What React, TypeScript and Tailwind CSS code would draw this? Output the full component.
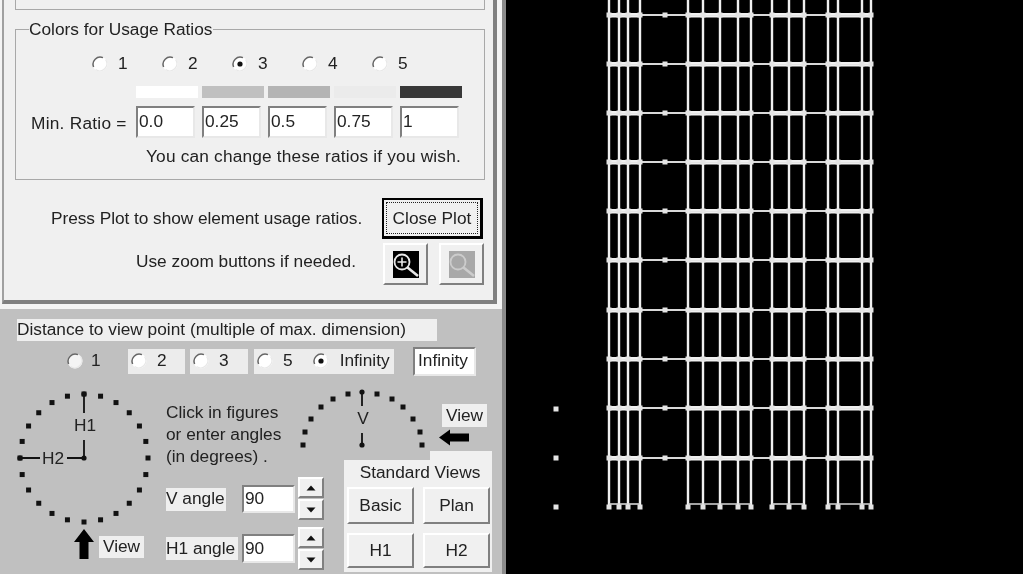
const FONT = "font-['Liberation_Sans',Arial,sans-serif]";

function Radio({ on = false, glow = false }: { on?: boolean; glow?: boolean }) {
  return (
    <svg width="18" height="18" viewBox="0 0 18 18" className="shrink-0">
      <circle cx="9" cy="9" r="7.5" fill={glow ? "#f4f4f4" : "#ffffff"} />
      <path d="M12 2.6 A7.2 7.2 0 0 0 2.6 12" fill="none" stroke="#666666" strokeWidth="1.5" />
      <path d="M14.6 4.6 A7.2 7.2 0 0 1 4.6 14.6" fill="none" stroke="#e8e8e8" strokeWidth="1.2" />
      {on && <circle cx="9" cy="9" r="2.6" fill="#111111" />}
    </svg>
  );
}

function Field({ value, className }: { value: string; className: string }) {
  return (
    <div className={`flex items-center bg-white border-2 border-t-[#808080] border-l-[#808080] border-r-[#e8e8e8] border-b-[#e8e8e8] pl-[1px] ${className}`}>
      {value}
    </div>
  );
}

function Btn({ label, className }: { label: string; className: string }) {
  return (
    <div className={`flex items-center justify-center bg-[#f0f0f0] border-2 border-t-white border-l-white border-r-[#808080] border-b-[#808080] ${className}`}>
      {label}
    </div>
  );
}

function Spin({ up }: { up: boolean }) {
  return (
    <div className="flex items-center justify-center w-[26px] h-[21px] bg-[#f0f0f0] border-2 border-t-white border-l-white border-r-[#808080] border-b-[#808080]">
      <svg width="10" height="6" viewBox="0 0 10 6">
        <path d={up ? "M5 0.5 L9.5 5.5 L0.5 5.5 Z" : "M0.5 0.5 L9.5 0.5 L5 5.5 Z"} fill="#111111" />
      </svg>
    </div>
  );
}

function Magnifier({ dark }: { dark: boolean }) {
  const c = dark ? "#e8e8e8" : "#cccccc";
  return (
    <div className="flex items-center justify-center w-[45px] h-[42px] bg-[#f0f0f0] border-2 border-t-white border-l-white border-r-[#808080] border-b-[#808080]">
      <svg width="26" height="27" viewBox="0 0 26 27">
        <rect width="26" height="27" fill={dark ? "#000000" : "#a8a8a8"} />
        <circle cx="9" cy="11" r="7.5" fill="none" stroke={c} strokeWidth="1.8" />
        <path d="M14.5 16.5 L25 25" stroke={c} strokeWidth="2.6" />
        {dark && <path d="M4.5 11 H13.5 M9 6.5 V15.5" stroke={c} strokeWidth="1.6" />}
      </svg>
    </div>
  );
}

const leftDots = Array.from({ length: 24 }, (_, i) => {
  const a = (i * 15 * Math.PI) / 180;
  return [84 + 64 * Math.sin(a), 73 + 64 * -Math.cos(a)];
});

function LeftClock() {
  return (
    <svg width="166" height="145" viewBox="0 0 166 145" className="block">
      {leftDots.map(([x, y], i) => (
        <rect key={i} x={x - 2.5} y={y - 2.5} width="5" height="5" fill="#111111" />
      ))}
      <path d="M84 9 V28 M84 55 V73 H67 M40 73 H20" stroke="#111111" strokeWidth="1.8" fill="none" />
      <circle cx="84" cy="73" r="2.6" fill="#111111" />
      <circle cx="20" cy="73" r="2.6" fill="#111111" />
      <circle cx="84" cy="9" r="2.6" fill="#111111" />
      <text x="85" y="46" textAnchor="middle" fontFamily="Liberation Sans" fontSize="17.3" fill="#222222">H1</text>
      <text x="53" y="79" textAnchor="middle" fontFamily="Liberation Sans" fontSize="17.3" fill="#222222">H2</text>
    </svg>
  );
}

const vDots = [
  [303, 60], [305, 47], [311, 34], [321, 22], [333, 14], [348, 9], [377, 9], [392, 14], [403, 22], [413, 34], [420, 47], [422, 60],
];

function VFigure() {
  return (
    <svg width="132" height="66" viewBox="298 385 132 66" className="block shrink-0">
      {vDots.map(([x, y], i) => (
        <rect key={i} x={x - 2.5} y={y + 382.5} width="5" height="5" fill="#111111" />
      ))}
      <path d="M362 392 V406 M362 433 V445" stroke="#111111" strokeWidth="1.8" />
      <circle cx="362" cy="392" r="2.6" fill="#111111" />
      <circle cx="362" cy="445" r="2.6" fill="#111111" />
      <text x="363" y="424" textAnchor="middle" fontFamily="Liberation Sans" fontSize="17.3" fill="#222222">V</text>
    </svg>
  );
}

const cols = [609, 619, 628, 640, 688, 703, 720, 738, 751, 772, 789, 804, 828, 838, 862, 871];
const floors = [15, 64, 113, 162, 211, 260, 310, 359, 408, 458];
const bays = [[609, 640], [688, 751], [772, 804], [828, 871]];

function Frame() {
  return (
    <svg width="517" height="574" viewBox="506 0 517 574" className="block shrink-0">
      {cols.map((x) => (
        <path key={x} d={`M${x} 0 V507`} stroke="#f0f0f0" strokeWidth="2.4" />
      ))}
      {floors.map((y) => (
        <g key={y}>
          <path d={`M609 ${y} H871`} stroke="#d8d8d8" strokeWidth="1.8" />
          {bays.map(([a, b]) => (
            <path key={a} d={`M${a} ${y - 1} H${b} M${a} ${y + 1.5} H${b}`} stroke="#f0f0f0" strokeWidth="1.8" />
          ))}
          {cols.map((x) => (
            <rect key={x} x={x - 2.5} y={y - 2.5} width="5" height="5" fill="#e4e4e4" />
          ))}
          <rect x="662.5" y={y - 2.5} width="5" height="5" fill="#e4e4e4" />
        </g>
      ))}
      {bays.map(([a, b]) => (
        <path key={a} d={`M${a} 504 H${b}`} stroke="#d8d8d8" strokeWidth="1.6" />
      ))}
      {cols.map((x) => (
        <rect key={x} x={x - 2.5} y="504.5" width="5" height="5" fill="#e4e4e4" />
      ))}
      {[409, 458, 507].map((y) => (
        <rect key={y} x="553.5" y={y - 2.5} width="5" height="5" fill="#e4e4e4" />
      ))}
    </svg>
  );
}

export default function App() {
  const swatches = ["bg-white", "bg-[#c0c0c0]", "bg-[#b4b4b4]", "bg-[#ebebeb]", "bg-[#383838]"];
  const ratios = ["0.0", "0.25", "0.5", "0.75", "1"];
  return (
    <div className={`flex w-[1023px] h-[574px] overflow-hidden bg-black text-[#222222] text-[17.3px] leading-none blur-[0.5px] ${FONT}`}>
      <div className="flex flex-col w-[506px] h-full shrink-0 bg-[#c0c0c0] border-r-[4px] border-r-[#8c8c8c]">
        {/* Upper panel with its raised outer band */}
        <div className="h-[309px] shrink-0 bg-[#f4f4f4] pl-[2px] pr-[5px] pb-[5px]">
          <div className="flex flex-col h-full bg-[#f0f0f0] border-l-[2px] border-l-[#a0a0a0] border-r-[4px] border-r-[#808080] border-b-[4px] border-b-[#808080] pl-[11px]">
            <div className="w-[470px] h-[10px] shrink-0 border border-t-0 border-[#a8a8a8]" />
            <fieldset className="w-[470px] h-[160px] mt-[10px] shrink-0 border border-[#a8a8a8] pl-[15px] pr-0">
              <legend className="ml-[-2px] h-[18px] pr-[1px] leading-[18px]">Colors for Usage Ratios</legend>
              <div className="flex pl-[60px] mt-[17px] h-[18px] items-center">
                {["1", "2", "3", "4", "5"].map((n) => (
                  <div key={n} className="flex items-center gap-[9px] w-[70px]">
                    <Radio on={n === "3"} />
                    <span>{n}</span>
                  </div>
                ))}
              </div>
              <div className="flex gap-[4px] pl-[105px] mt-[13px]">
                {swatches.map((s) => (
                  <div key={s} className={`w-[62px] h-[12px] ${s}`} />
                ))}
              </div>
              <div className="flex items-center mt-[8px]">
                <span className="w-[105px] pt-[4px] whitespace-nowrap tracking-[0.25px]">Min. Ratio =</span>
                <div className="flex gap-[7px]">
                  {ratios.map((r) => (
                    <Field key={r} value={r} className="w-[59px] h-[32px]" />
                  ))}
                </div>
              </div>
              <div className="mt-[10px] pl-[115px] whitespace-nowrap tracking-[0.18px]">You can change these ratios if you wish.</div>
            </fieldset>
            <div className="flex items-center w-[470px] mt-[18px]">
              <span className="w-[367px] pl-[36px] whitespace-nowrap tracking-[-0.05px]">Press Plot to show element usage ratios.</span>
              <div className="flex items-center justify-center w-[101px] h-[41px] bg-[#f0f0f0] border-2 border-black border-r-[3px] border-b-[3px] p-[2px]">
                <div className="flex items-center justify-center w-full h-full pt-[2px] border border-dotted border-[#222222] whitespace-nowrap">Close Plot</div>
              </div>
            </div>
            <div className="flex items-center w-[470px] mt-[4px]">
              <span className="w-[368px] pl-[121px] pb-[4px] whitespace-nowrap">Use zoom buttons if needed.</span>
              <Magnifier dark />
              <div className="w-[11px]" />
              <Magnifier dark={false} />
            </div>
          </div>
        </div>

        {/* Lower panel */}
        <div className="flex flex-col flex-1 min-h-0 pt-[10px]">
          <div className="flex items-center w-[420px] h-[22px] ml-[17px] bg-[#efefef] whitespace-nowrap">
            Distance to view point (multiple of max. dimension)
          </div>
          <div className="flex items-center h-[30px] mt-[5px]">
            <div className="flex items-center gap-[7px] ml-[66px] w-[62px]"><Radio glow /><span>1</span></div>
            <div className="flex items-center gap-[9px] w-[57px] h-[25px] pl-[2px] bg-[#ececec]"><Radio /><span>2</span></div>
            <div className="flex items-center gap-[9px] w-[58px] h-[25px] ml-[5px] pl-[2px] bg-[#ececec]"><Radio /><span>3</span></div>
            <div className="flex items-center w-[140px] h-[25px] ml-[6px] pl-[2px] bg-[#ececec]">
              <Radio />
              <span className="ml-[9px]">5</span>
              <span className="ml-[19px]"><Radio on /></span>
              <span className="ml-[10px]">Infinity</span>
            </div>
            <Field value="Infinity" className="w-[63px] h-[29px] ml-[19px] pl-[3px]" />
          </div>
          <div className="flex flex-1 min-h-0 mt-[9px]">
            <div className="flex flex-col w-[166px] shrink-0">
              <LeftClock />
              <div className="flex items-end ml-[74px] mt-[-1px]">
                <svg width="20" height="30" viewBox="0 0 20 30" className="shrink-0">
                  <path d="M10 0 L20 13 H14.5 V30 H5.5 V13 H0 Z" fill="#000000" />
                </svg>
                <span className="flex items-center justify-center w-[45px] h-[22px] ml-[5px] mb-[1px] bg-[#efefef]">View</span>
              </div>
            </div>
            <div className="flex flex-col flex-1 min-w-0">
              <div className="flex h-[66px] shrink-0">
                <div className="flex flex-col w-[132px] shrink-0 pt-[19px] gap-[6px] leading-[16px] whitespace-nowrap">
                  <span>Click in figures</span>
                  <span>or enter angles</span>
                  <span>(in degrees) .</span>
                </div>
                <VFigure />
                <div className="flex flex-col ml-[9px] pt-[19px]">
                  <span className="flex items-center justify-center w-[45px] h-[23px] ml-[3px] bg-[#efefef]">View</span>
                  <svg width="31" height="17" viewBox="0 0 31 17" className="mt-[2px]">
                    <path d="M0 8.5 L11 0.5 V4.5 H30 V12.5 H11 V16.5 Z" fill="#000000" />
                  </svg>
                </div>
              </div>
              <div className="flex flex-1 min-h-0">
                <div className="flex flex-col w-[158px] shrink-0 pt-[26px]">
                  <div className="flex items-center h-[43px]">
                    <span className="flex items-center w-[60px] h-[23px] mt-[1px] bg-[#efefef] whitespace-nowrap">V angle</span>
                    <Field value="90" className="w-[53px] h-[28px] ml-[16px] mt-[1px]" />
                    <div className="flex flex-col ml-[3px] gap-[1px]"><Spin up /><Spin up={false} /></div>
                  </div>
                  <div className="flex items-center h-[43px] mt-[7px]">
                    <span className="flex items-center w-[72px] h-[23px] bg-[#efefef] whitespace-nowrap">H1 angle</span>
                    <Field value="90" className="w-[53px] h-[29px] ml-[4px]" />
                    <div className="flex flex-col ml-[3px] gap-[1px]"><Spin up /><Spin up={false} /></div>
                  </div>
                </div>
                <div className="flex flex-col w-[148px] ml-[20px] shrink-0">
                  <div className="w-[62px] h-[9px] ml-[86px] bg-[#f0f0f0]" />
                  <div className="flex flex-col flex-1 bg-[#f0f0f0] mb-[2px] px-[3px]">
                    <div className="flex h-[27px] pb-[2px] items-center justify-center pl-[4px] whitespace-nowrap">Standard Views</div>
                    <div className="grid grid-cols-[67px_67px] gap-x-[9px] gap-y-[9px]">
                      <Btn label="Basic" className="h-[37px]" />
                      <Btn label="Plan" className="h-[37px]" />
                      <Btn label="H1" className="h-[35px]" />
                      <Btn label="H2" className="h-[35px]" />
                    </div>
                  </div>
                </div>
              </div>
            </div>
          </div>
        </div>
      </div>
      <Frame />
    </div>
  );
}
